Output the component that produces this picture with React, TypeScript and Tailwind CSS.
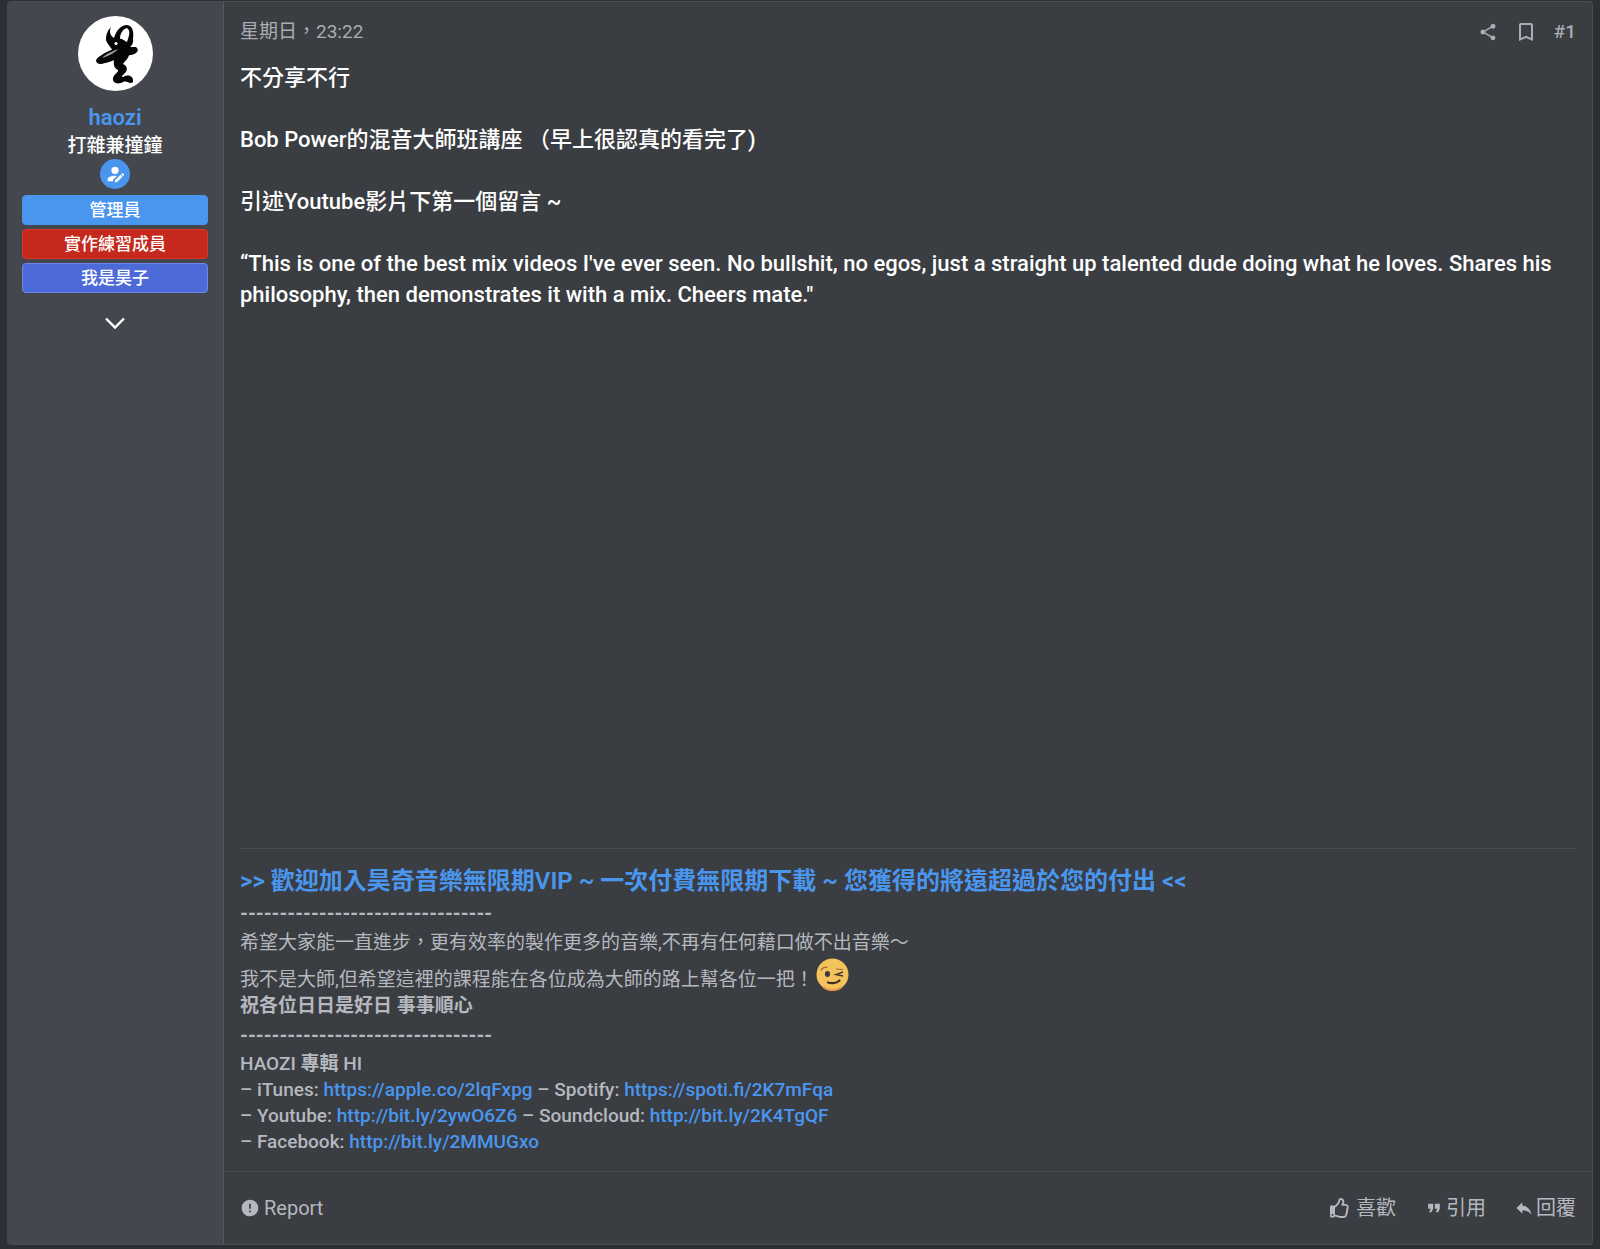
import React from 'react';
import { MdShare, MdBookmarkBorder, MdError, MdFormatQuote, MdReply } from 'react-icons/md';
import { FaRegThumbsUp } from 'react-icons/fa';

const link = 'text-[#4a96ee] hover:underline';

function Avatar() {
  return (
    <a href="#haozi" aria-label="haozi" className="block size-[75px] overflow-hidden rounded-full bg-white">
      <svg viewBox="0 0 75 75" className="size-full" fill="#050505">
        <path d="M33 11 C31 15 32 20 36 22 C38 15 42 10 48 9 C55 9 56 16 55 23 C56 29 52 32 46 34 L35 36 C34 32 29 28 28 24 C28 18 30 14 33 11 Z" />
        <path d="M42 23 C42 17 45 13 49 12 C53 15 51 20 49 26 C46 25 44 22 42 23 Z" fill="#fff" />
        <path d="M18 44 C20 40 30 35 40 31 L58 31 C62 34 59 38 53 39 C43 40 34 46 27 47 C22 49 18 48 18 44 Z" />
        <path d="M24 42 C29 37 35 35 40 33 C37 37 31 40 24 42 Z" fill="#9a9a9a" />
        <circle cx="38" cy="27.500" r="1.600" fill="#fff" />
        <path d="M37 38 L51 37 C52 41 47 45 45 48 C50 50 50 55 46 58 C44 60 43 61 45 61 C50 58 56 60 55 66 C52 69 49 64 45 66 C40 69 34 67 35 62 C36 58 41 56 40 54 C35 52 35 46 37 38 Z" />
      </svg>
    </a>
  );
}

function UserBadge() {
  return (
    <span className="flex size-[30px] items-center justify-center rounded-full bg-[#4a96ee]">
      <svg viewBox="0 0 24 24" className="size-[22px]" fill="#fff">
        <path d="M21.7,13.35L20.7,14.35L18.65,12.3L19.65,11.3C19.86,11.09 20.21,11.09 20.42,11.3L21.7,12.58C21.91,12.79 21.91,13.14 21.7,13.35M12,18.94L18.06,12.88L20.11,14.93L14.06,21H12V18.94M12,14C7.58,14 4,15.79 4,18V20H10V18.11L14,14.11C13.34,14.03 12.67,14 12,14M12,4A4,4 0 0,0 8,8A4,4 0 0,0 12,12A4,4 0 0,0 16,8A4,4 0 0,0 12,4Z" />
      </svg>
    </span>
  );
}

function UserPanel() {
  return (
    <aside className="flex w-[217px] shrink-0 flex-col items-center border-r border-[#565960] bg-[#44474e] px-[15px] pt-[14px]">
      <Avatar />
      <a href="#haozi" className="mt-3 text-[22px] leading-[30px] font-semibold text-[#4a96ee]">haozi</a>
      <div className="text-[19px] leading-[26px] font-medium text-white">打雜兼撞鐘</div>
      <UserBadge />
      <div className="mt-1.5 flex w-full flex-col gap-1 text-center text-[17px] leading-7 font-medium text-white">
        <div className="rounded border border-[#4a96ee] bg-[#4a96ee]">管理員</div>
        <div className="rounded border border-[#e03326] bg-[#c5281c]">實作練習成員</div>
        <div className="rounded border border-[#6f88e8] bg-[#4c6bd9]">我是昊子</div>
      </div>
      <button type="button" aria-label="展開" className="mt-[18px] text-white">
        <svg viewBox="0 0 24 24" className="size-6" fill="none" stroke="currentColor" strokeWidth="2.400">
          <path d="M3 7.500 L12 16.500 L21 7.500" />
        </svg>
      </button>
    </aside>
  );
}

function Wink() {
  return (
    <svg viewBox="0 0 33 33" role="img" aria-label="wink" className="mx-0.5 inline-block size-[33px] align-[-5px]">
      <circle cx="16.500" cy="16.500" r="16" fill="#f5c35c" />
      <path d="M7 29 A16 16 0 0 0 26 29" fill="none" stroke="#e79a4c" strokeWidth="2" />
      <ellipse cx="11.500" cy="16" rx="2.600" ry="2.900" fill="#3b3a3e" />
      <path d="M5 12.500 C6 10 8.500 9 11.500 9.200 M20 11 L27 11.500" fill="none" stroke="#9b6a3e" strokeWidth="1.200" />
      <path d="M27 14 L20 16.500 L27 18" fill="none" stroke="#4b3c36" strokeWidth="1.500" />
      <path d="M12 24.500 C16 26 21 25 23.500 22.500" fill="none" stroke="#3b2e28" strokeWidth="2.200" strokeLinecap="round" />
    </svg>
  );
}

function Signature() {
  return (
    <div className="border-t border-[#4a4d52] pt-4 text-[19px] leading-[26px] text-[#b5b8bf]">
      <a href="#vip" className="block text-[24px] leading-8 font-semibold text-[#4a96ee]">
        &gt;&gt; 歡迎加入昊奇音樂無限期VIP ~ 一次付費無限期下載 ~ 您獲得的將遠超過於您的付出 &lt;&lt;
      </a>
      <div className="text-[20px] leading-[33px] font-bold">--------------------------------</div>
      <div>希望大家能一直進步，更有效率的製作更多的音樂,不再有任何藉口做不出音樂～</div>
      <div className="pt-0.5">我不是大師,但希望這裡的課程能在各位成為大師的路上幫各位一把！<Wink /></div>
      <div className="font-bold">祝各位日日是好日 事事順心</div>
      <div className="text-[20px] leading-8 font-bold">--------------------------------</div>
      <div className="font-medium">
        <div>HAOZI <b>專輯</b> HI</div>
        <div>– iTunes: <a href="https://apple.co/2lqFxpg" className={link}>https://apple.co/2lqFxpg</a> – Spotify: <a href="https://spoti.fi/2K7mFqa" className={link}>https://spoti.fi/2K7mFqa</a></div>
        <div>– Youtube: <a href="http://bit.ly/2ywO6Z6" className={link}>http://bit.ly/2ywO6Z6</a> – Soundcloud: <a href="http://bit.ly/2K4TgQF" className={link}>http://bit.ly/2K4TgQF</a></div>
        <div>– Facebook: <a href="http://bit.ly/2MMUGxo" className={link}>http://bit.ly/2MMUGxo</a></div>
      </div>
    </div>
  );
}

export default function App() {
  return (
    <main lang="zh-Hant" className="min-h-screen bg-[#2c2f33] px-[7px] pt-px pb-1 font-['Roboto','Noto_Sans_CJK_TC',sans-serif]">
      <article className="flex overflow-hidden rounded border-y border-r border-[#4a4d52] bg-[#3a3d41]">
        <UserPanel />
        <div className="flex min-w-0 flex-1 flex-col">
          <div className="px-4">
            <header className="flex items-center justify-between pt-4 text-[19px] leading-7 text-[#a9acb3]">
              <a href="#post-1"><time>星期日，23:22</time></a>
              <div className="flex items-center gap-4">
                <button type="button" aria-label="分享"><MdShare className="size-5" /></button>
                <button type="button" aria-label="書籤"><MdBookmarkBorder className="size-6" /></button>
                <a href="#post-1" className="font-medium">#1</a>
              </div>
            </header>
            <div className="min-h-[802px] pt-4 text-[22px] leading-[31px] font-medium text-white">
              <p>不分享不行</p>
              <br />
              <p>Bob Power的混音大師班講座 （早上很認真的看完了)</p>
              <br />
              <p>引述Youtube影片下第一個留言 ~</p>
              <br />
              <p>“This is one of the best mix videos I've ever seen. No bullshit, no egos, just a straight up talented dude doing what he loves. Shares his philosophy, then demonstrates it with a mix. Cheers mate."</p>
            </div>
            <Signature />
          </div>
          <footer className="mt-4 flex items-center justify-between border-t border-[#4a4d52] px-4 py-5 text-[20px] leading-8 text-[#b5b8bf]">
            <button type="button" className="flex items-center gap-1"><MdError className="size-5" />Report</button>
            <div className="flex items-center gap-7">
              <button type="button" className="flex items-center gap-1.5"><FaRegThumbsUp className="size-5" />喜歡</button>
              <button type="button" className="flex items-center gap-0.5"><MdFormatQuote className="size-5" />引用</button>
              <button type="button" className="flex items-center gap-0.5"><MdReply className="size-5" />回覆</button>
            </div>
          </footer>
        </div>
      </article>
    </main>
  );
}
